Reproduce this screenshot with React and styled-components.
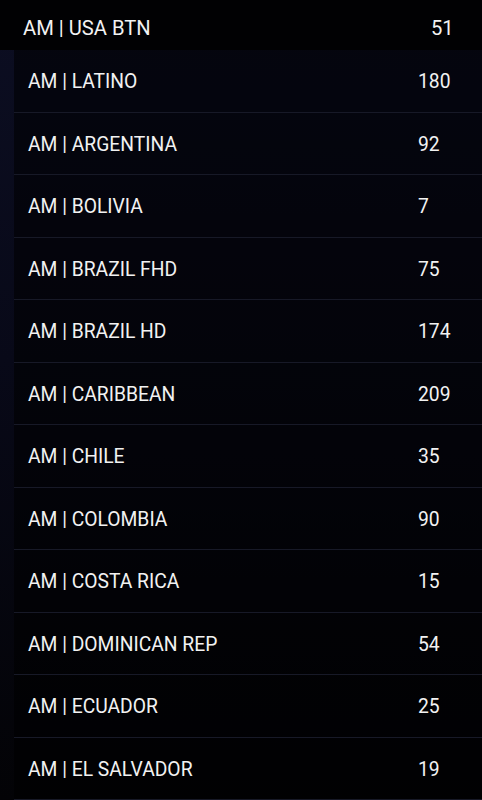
import styled, { createGlobalStyle } from 'styled-components';

const GlobalStyle = createGlobalStyle`
	html, body {
		margin: 0;
		padding: 0;
		height: 100%;
		overflow: hidden;
	}
	body {
		background: linear-gradient(180deg, #0c0e22 0%, #080918 45%, #030306 100%);
		font-family: Roboto, "Noto Sans", "Liberation Sans", sans-serif;
		color: #f2f2f2;
	}
`;

const categories = [
	{ name: 'AM | LATINO', count: 180 },
	{ name: 'AM | ARGENTINA', count: 92 },
	{ name: 'AM | BOLIVIA', count: 7 },
	{ name: 'AM | BRAZIL FHD', count: 75 },
	{ name: 'AM | BRAZIL HD', count: 174 },
	{ name: 'AM | CARIBBEAN', count: 209 },
	{ name: 'AM | CHILE', count: 35 },
	{ name: 'AM | COLOMBIA', count: 90 },
	{ name: 'AM | COSTA RICA', count: 15 },
	{ name: 'AM | DOMINICAN REP', count: 54 },
	{ name: 'AM | ECUADOR', count: 25 },
	{ name: 'AM | EL SALVADOR', count: 19 },
];

export default function App() {
	return (
		<>
			<GlobalStyle />
			<Page>
				<FocusedRow>
					<span className="name">AM | USA BTN</span>
					<span className="count">51</span>
				</FocusedRow>
				<List>
					{categories.map((c) => (
						<Row key={c.name}>
							<span className="name">{c.name}</span>
							<span className="count">{c.count}</span>
						</Row>
					))}
				</List>
			</Page>
		</>
	);
}

const Page = styled.div`
	display: flex;
	flex-direction: column;
	width: 482px;
	height: 800px;
	overflow: hidden;
`;

const FocusedRow = styled.div`
	display: grid;
	grid-template-columns: 1fr 51px;
	align-items: center;
	box-sizing: border-box;
	height: 50px;
	padding: 5px 0 0 23px;
	background: #010103;
	font-size: 20.2px;
	flex-shrink: 0;
	.name {
		white-space: nowrap;
	}
`;

const List = styled.div`
	display: flex;
	flex-direction: column;
	margin-left: 14px;
	background: rgba(0, 0, 0, 0.55);
	flex: 1;
`;

const Row = styled.div`
	display: grid;
	grid-template-columns: 1fr 64px;
	align-items: center;
	box-sizing: border-box;
	height: 62.5px;
	flex-shrink: 0;
	padding: 2px 0 0 14px;
	border-bottom: 1px solid #171927;
	font-size: 19.3px;
	.name {
		white-space: nowrap;
	}
`;
